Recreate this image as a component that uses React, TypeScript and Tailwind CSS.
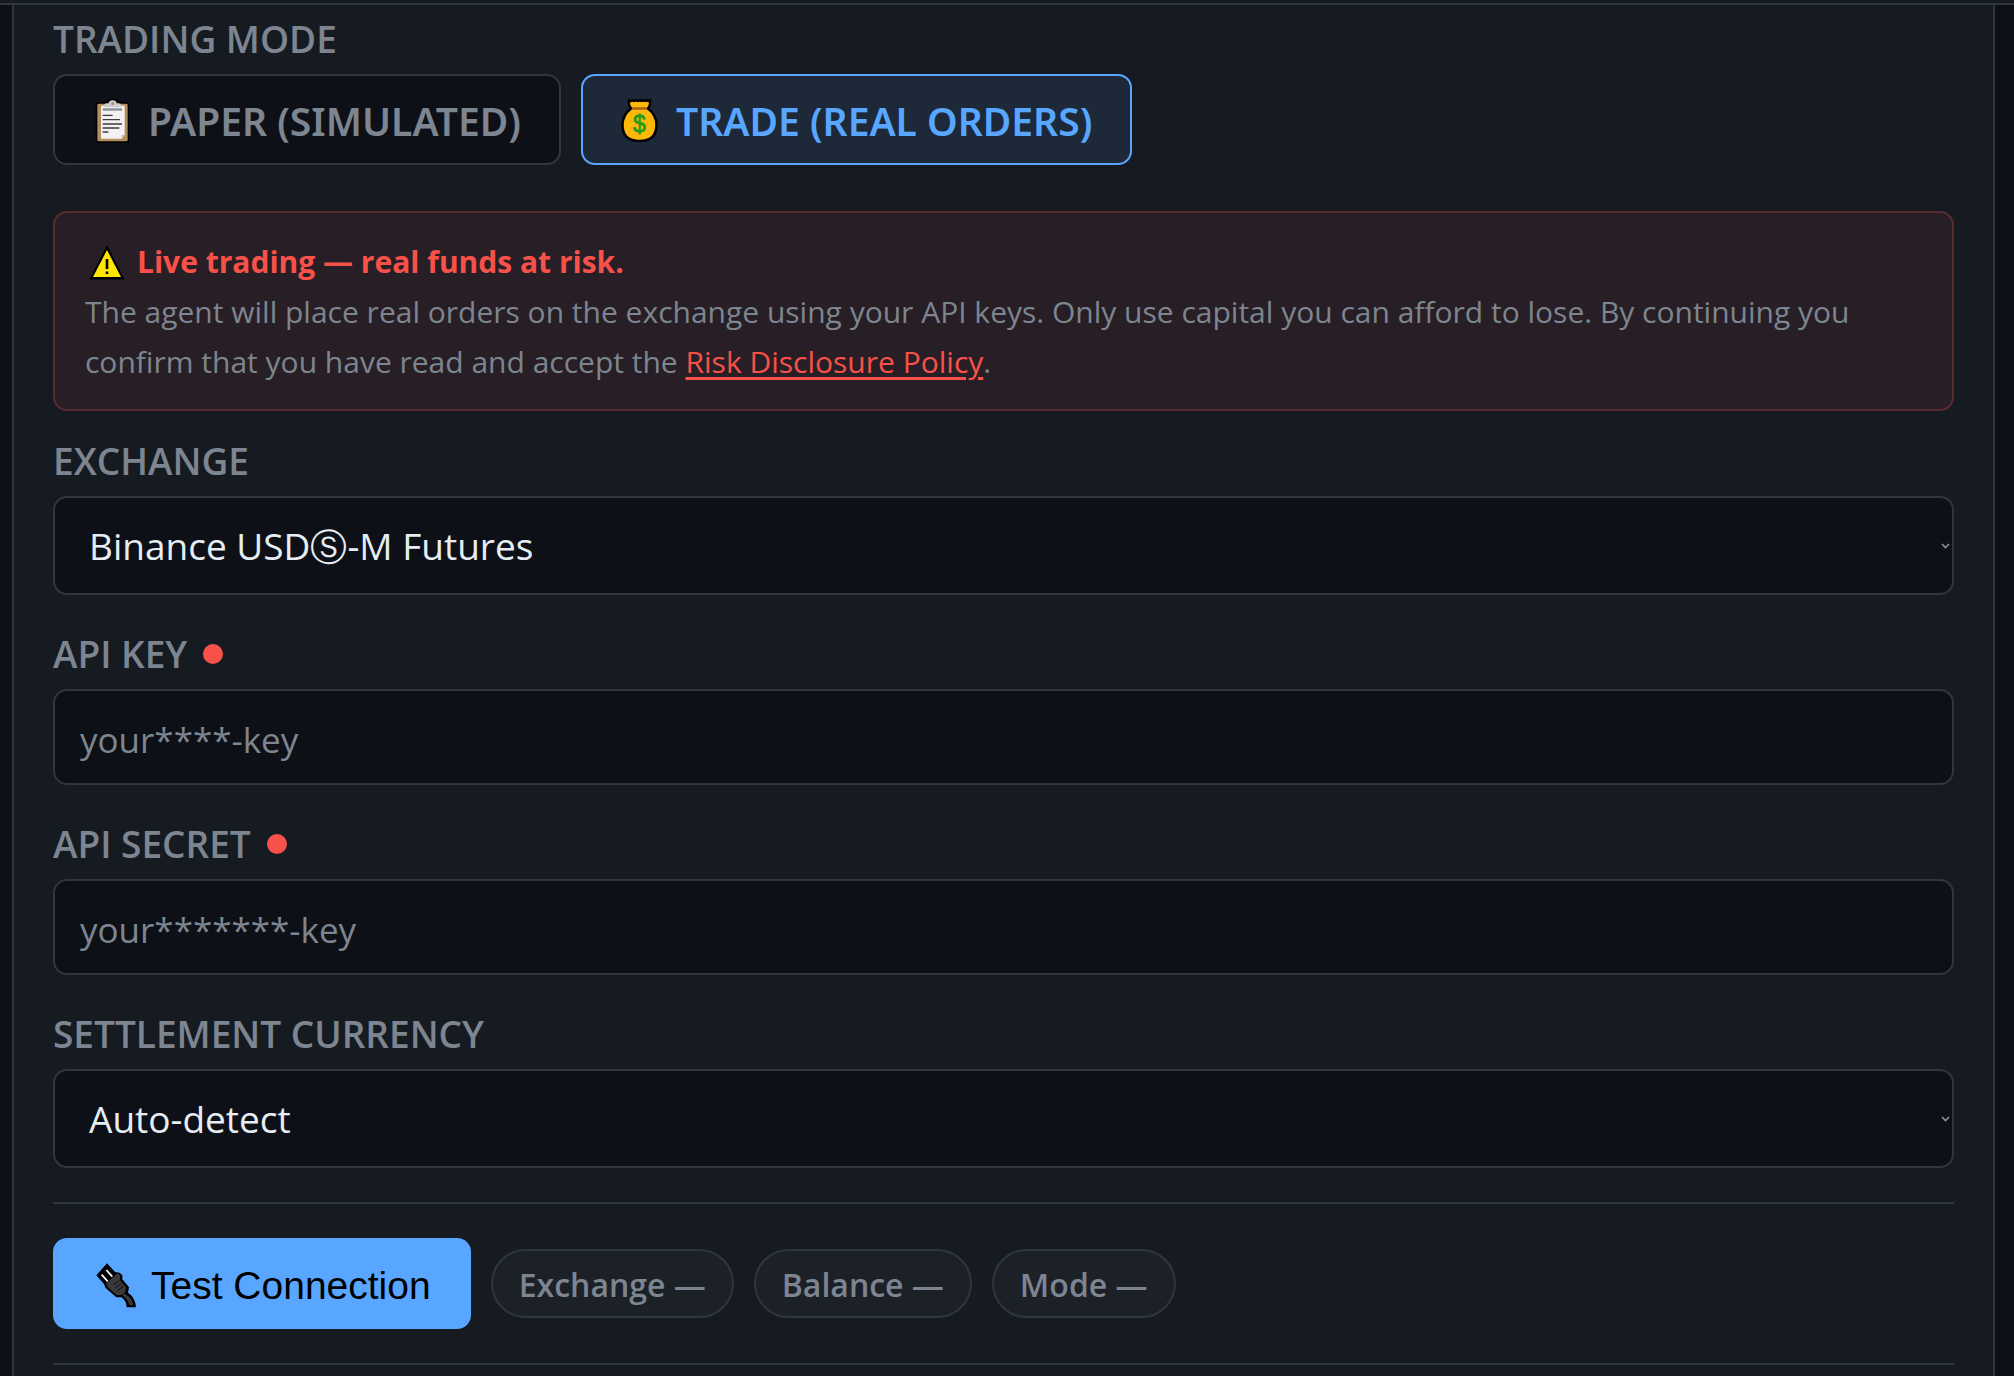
import { useState } from "react";
import type { ReactNode } from "react";

function ClipboardIcon() {
  return (
    <svg width="44" height="45" viewBox="3 15 132 135" className="shrink-0" aria-hidden="true">
      <path d="M22 32H48q4-10 20-10t20 10H112V145H22z" fill="#000" stroke="#000" strokeWidth="10" strokeLinejoin="round" />
      <rect x="22" y="32" width="91" height="113" rx="4" fill="#b58e5f" />
      <path d="M33 38H104V126L95 137H33z" fill="#f3f0f2" />
      <path d="M104 126H95V137z" fill="#c9b9a8" />
      <path d="M43 43V36q0-5 8-5h5q1-9 12-9t12 9h5q8 0 8 5v7z" fill="#cdcdcf" />
      <circle cx="68" cy="32" r="4" fill="#a97f58" />
      <rect x="38" y="46" width="58" height="7" fill="#8d8d92" />
      <path d="M38 67H68M38 80H90M38 93H96M38 105H88M38 117H55" stroke="#3b3b40" strokeWidth="4" />
    </svg>
  );
}

function MoneyBagIcon() {
  return (
    <svg width="44" height="45" viewBox="0 0 44 45" className="shrink-0" aria-hidden="true">
      <path
        d="M10 2q1.500 2 3.500 0q1.800 2 3.600 0q1.800 2 3.600 0q1.800 2 3.600 0q1.800 2 3.600 0q1.500 2 3.100 0q1 5-2 8.500q8.500 6.500 8.500 16.500q0 16-17 16t-17-16q0-10 8.500-16.500q-3-3.500-2-8.500z"
        fill="#ffb70a"
        stroke="#000"
        strokeWidth="2.500"
        strokeLinejoin="round"
      />
      <path d="M13 10.500H28" stroke="#a8611a" strokeWidth="2.500" />
      <text x="20.500" y="34" textAnchor="middle" fontFamily="Liberation Sans, sans-serif" fontSize="23" fontWeight="400" fill="#1f9d16" stroke="#1f9d16" strokeWidth="0.800">$</text>
    </svg>
  );
}

function WarningIcon() {
  return (
    <svg width="36" height="36" viewBox="0 0 36 36" className="ml-1 shrink-0" aria-hidden="true">
      <path d="M18 1L35.500 35.500H.5z" fill="#000" />
      <path d="M18 6L32 33H4z" fill="#ffe600" />
      <path d="M18 15V25M18 27.500V30" stroke="#000" strokeWidth="2.600" />
    </svg>
  );
}

function PlugIcon() {
  return (
    <svg width="45" height="45" viewBox="42 39 135 135" className="shrink-0" aria-hidden="true">
      <path d="M84 40L108 66L122 68L130 76L130 88L150 112L147 128Q168 140 171 172H143Q143 154 128 142H112L80 114L75 102L52 76z" fill="#000" />
      <path d="M68 74L86 94M82 60L100 80" stroke="#fff" strokeWidth="5" />
      <path d="M82 100L116 70L123 77L123 90L142 113L138 127L126 135H114L86 112z" fill="#39393b" />
      <path d="M134 130Q160 142 163 165H150Q149 149 130 136z" fill="#39393b" />
      <path d="M104 104L122 90M109 114L128 99M115 122L134 108" stroke="#0d0d0e" strokeWidth="3" />
    </svg>
  );
}

function ChevronIcon() {
  return (
    <svg
      width="9"
      height="6"
      viewBox="0 0 9 6"
      fill="none"
      className="pointer-events-none absolute top-1/2 right-1 -translate-y-1/2"
      aria-hidden="true"
    >
      <path d="M1 1L4.500 4.500L8 1" stroke="#8b9098" strokeWidth="1.600" />
    </svg>
  );
}

const labelClass = "text-[37px] leading-[48px] font-semibold text-[#7d8590]";
const fieldClass =
  "block w-full rounded-[14px] border-2 border-[#30363d] bg-[#0d1117] outline-none focus:border-[#58a6ff]";

function ModeButton({ active, onClick, icon, children }: {
  active: boolean;
  onClick: () => void;
  icon: ReactNode;
  children: ReactNode;
}) {
  return (
    <button
      type="button"
      aria-pressed={active}
      onClick={onClick}
      className={`flex h-[91px] items-center gap-[13px] rounded-[14px] border-2 pt-[2px] pr-[38px] pl-9 font-['Noto_Sans','Open_Sans',sans-serif] text-[39px] leading-none font-semibold whitespace-nowrap ${
        active
          ? "border-[#58a6ff] bg-[#1d2938] text-[#58a6ff]"
          : "border-[#30363d] bg-[#0d1117] text-[#7d8590]"
      }`}
    >
      {icon}
      <span>{children}</span>
    </button>
  );
}

function SelectField({ id, label, options, className }: {
  id: string;
  label: string;
  options: string[];
  className: string;
}) {
  return (
    <div className={`flex flex-col gap-[11px] ${className}`}>
      <label htmlFor={id} className={labelClass}>{label}</label>
      <div className="relative">
        <select id={id} className={`${fieldClass} h-[99px] appearance-none px-[34px] text-[37px] text-[#e6edf3]`}>
          {options.map((o) => (
            <option key={o}>{o}</option>
          ))}
        </select>
        <ChevronIcon />
      </div>
    </div>
  );
}

function KeyField({ id, label, placeholder }: { id: string; label: string; placeholder: string }) {
  return (
    <div className="mt-[35px] flex flex-col gap-[11px]">
      <div className="flex items-center gap-4">
        <label htmlFor={id} className={labelClass}>{label}</label>
        <span className="size-5 rounded-full bg-[#f85149]" />
      </div>
      <input
        id={id}
        type="text"
        placeholder={placeholder}
        className={`${fieldClass} h-24 px-[25px] pt-1 text-[35px] text-[#e6edf3] placeholder:text-[#7d8590]`}
      />
    </div>
  );
}

export default function App() {
  const [mode, setMode] = useState("trade");
  const stats = ["Exchange", "Balance", "Mode"];

  return (
    <div className="flex h-screen flex-col overflow-hidden bg-[#0d1117] font-['Open_Sans','Noto_Sans',sans-serif]">
      <div className="h-[5px] shrink-0 border-b-2 border-[#30363d] bg-[#161b22]" />

      <main className="mr-[19px] ml-3 grow border-x-2 border-[#30363d] bg-[#161b22] px-[39px] pt-[10px]">
        {/* Mode switch */}
        <section className="flex flex-col gap-[11px]">
          <h2 className={labelClass}>TRADING MODE</h2>
          <div className="flex gap-5">
            <ModeButton active={mode === "paper"} onClick={() => setMode("paper")} icon={<ClipboardIcon />}>
              PAPER (SIMULATED)
            </ModeButton>
            <ModeButton active={mode === "trade"} onClick={() => setMode("trade")} icon={<MoneyBagIcon />}>
              TRADE (REAL ORDERS)
            </ModeButton>
          </div>
        </section>

        {/* Live trading warning */}
        <div className="mt-[46px] rounded-[14px] border-2 border-[#5a2b2e] bg-[#271f25] px-[30px] pt-6 pb-[22px] text-[30px] leading-[50px] text-[#7d8590]">
          <div className="flex items-center gap-3 text-[#f85149]">
            <WarningIcon />
            <strong className="font-bold">Live trading — real funds at risk.</strong>
          </div>
          <p>
            The agent will place real orders on the exchange using your API keys. Only use capital you can afford to
            lose. By continuing you confirm that you have read and accept the{" "}
            <a href="#risk" className="text-[#f85149] underline decoration-[3px] underline-offset-4">Risk Disclosure Policy</a>.
          </p>
        </div>

        <SelectField
          id="exchange"
          label="EXCHANGE"
          className="mt-[26px]"
          options={["Binance USDⓈ-M Futures"]}
        />
        <KeyField id="api-key" label="API KEY" placeholder="your****-key" />
        <KeyField id="api-secret" label="API SECRET" placeholder="your*******-key" />
        <SelectField
          id="currency"
          label="SETTLEMENT CURRENCY"
          className="mt-[35px]"
          options={["Auto-detect"]}
        />

        {/* Connection check */}
        <div className="mt-[34px] flex items-center gap-5 border-y-2 border-[#30363d] py-[34px]">
          <button
            type="button"
            className="flex h-[91px] items-center gap-[13px] rounded-[14px] bg-[#58a6ff] px-10 pt-1 font-['Liberation_Sans',sans-serif] text-[39px] leading-none whitespace-nowrap text-black"
          >
            <PlugIcon />
            <span>Test Connection</span>
          </button>
          {stats.map((s) => (
            <span
              key={s}
              className="flex h-[69px] items-center rounded-full border-2 border-[#30363d] bg-[#1c2128] px-[26px] pt-[3px] text-[32px] leading-none font-semibold whitespace-nowrap text-[#7d8590]"
            >
              {s} —
            </span>
          ))}
        </div>
      </main>
    </div>
  );
}
